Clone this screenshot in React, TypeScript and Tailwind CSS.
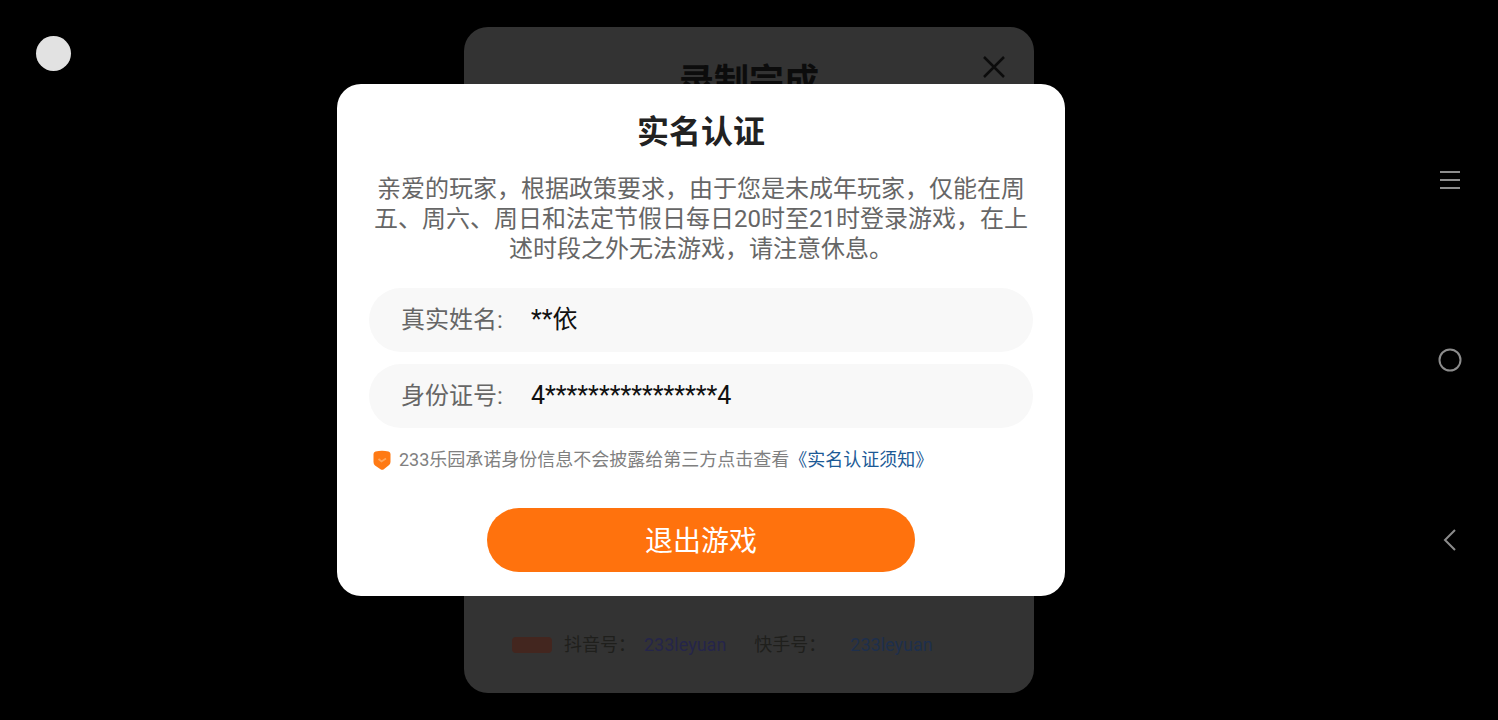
import type { ReactNode } from "react";

interface FieldProps {
  id: string;
  label: string;
  value: string;
}

function Field({ id, label, value }: Readonly<FieldProps>) {
  return (
    <div className="flex h-16 items-center rounded-full bg-[#f8f8f8] px-8">
      <label htmlFor={id} className="w-[130px] shrink-0 text-2xl text-[#666]">
        {label}
      </label>
      <input
        id={id}
        value={value}
        readOnly
        className="min-w-0 flex-1 bg-transparent text-[25px] text-[#111] outline-none"
      />
    </div>
  );
}

function ShieldIcon() {
  return (
    <svg viewBox="0 0 18 20" className="h-5 w-[18px] shrink-0" aria-hidden="true">
      <path
        d="M2.5 1.5 Q9 0 15.5 1.5 Q17.5 2 17.5 4 V12 Q17.5 14 15.5 15.5 L10.5 19.5 Q9 20.2 7.5 19.2 L2 15.5 Q0.5 14 0.5 12 V4 Q0.5 2 2.5 1.5Z"
        fill="#ff7a14"
      />
      <path d="M5.5 9 L8.5 11.5 L13 8.5" fill="none" stroke="#ffa75c" strokeWidth="1.8" />
    </svg>
  );
}

interface NavButtonProps {
  label: string;
  children: ReactNode;
}

function NavButton({ label, children }: Readonly<NavButtonProps>) {
  return (
    <button type="button" aria-label={label} className="flex size-6 items-center justify-center">
      <svg viewBox="0 0 24 24" className="size-6" fill="none" stroke="#8c8c8c" strokeWidth="2">
        {children}
      </svg>
    </button>
  );
}

function BackgroundPanel() {
  return (
    <section className="relative flex h-[666px] w-[570px] flex-col justify-between rounded-3xl bg-[#333]">
      <h2 className="pt-8 text-center text-[35px] leading-[48px] font-bold text-[#0c0c0c]">
        录制完成
      </h2>
      <button type="button" aria-label="关闭" className="absolute top-7 right-7">
        <svg viewBox="0 0 24 24" className="size-6" fill="none" stroke="#0c0c0c" strokeWidth="2.5">
          <path d="M2 2 L22 22 M22 2 L2 22" />
        </svg>
      </button>
      <div className="flex items-center px-12 pb-8 text-lg leading-8 text-[#1f1f1c]">
        <span className="h-4 w-10 rounded bg-[#43261f]" />
        <p className="ml-3">
          抖音号：<span className="ml-2 text-[#25254a]">233leyuan</span>
        </p>
        <p className="ml-7">
          快手号：<span className="ml-6 text-[#1e2f4c]">233leyuan</span>
        </p>
      </div>
    </section>
  );
}

export default function App() {
  return (
    <div className="relative flex min-h-screen overflow-hidden bg-black font-[Roboto,'Noto_Sans_CJK_SC',sans-serif]">
      <div className="absolute inset-0 flex items-center justify-center">
        <BackgroundPanel />
      </div>

      <div className="absolute top-9 left-9 size-[35px] rounded-full bg-[#e2e2e2]" />

      <main className="relative flex flex-1 items-center justify-center pt-6 pb-16">
        <div
          role="dialog"
          aria-labelledby="dialog-title"
          className="flex w-[728px] flex-col rounded-3xl bg-white px-8 py-6"
        >
          <h1 id="dialog-title" className="text-center text-[32px] leading-[48px] font-bold text-[#222]">
            实名认证
          </h1>
          <p className="mt-[18px] text-center text-2xl leading-[30px] text-[#666]">
            亲爱的玩家，根据政策要求，由于您是未成年玩家，仅能在周五、周六、周日和法定节假日每日20时至21时登录游戏，在上述时段之外无法游戏，请注意休息。
          </p>
          <div className="mt-6 flex flex-col gap-3">
            <Field id="real-name" label="真实姓名:" value="**依" />
            <Field id="id-number" label="身份证号:" value="4****************4" />
          </div>
          <div className="mt-5 flex items-center gap-2 px-1 text-lg leading-6 text-[#808080]">
            <ShieldIcon />
            <p>
              233乐园承诺身份信息不会披露给第三方点击查看
              <a href="#notice" className="text-[#1c5a96]">
                《实名认证须知》
              </a>
            </p>
          </div>
          <button
            type="button"
            className="mt-9 h-16 w-[428px] self-center rounded-full bg-[#ff720d] pt-1 text-[28px] text-white"
          >
            退出游戏
          </button>
        </div>
      </main>

      <nav className="relative flex w-24 flex-col items-center justify-center gap-[156px]">
        <NavButton label="最近任务">
          <path d="M2 4 H22 M2 12 H22 M2 20 H22" />
        </NavButton>
        <NavButton label="主屏幕">
          <circle cx="12" cy="12" r="10.5" />
        </NavButton>
        <NavButton label="返回">
          <path d="M17 2 L7 12 L17 22" />
        </NavButton>
      </nav>
    </div>
  );
}
